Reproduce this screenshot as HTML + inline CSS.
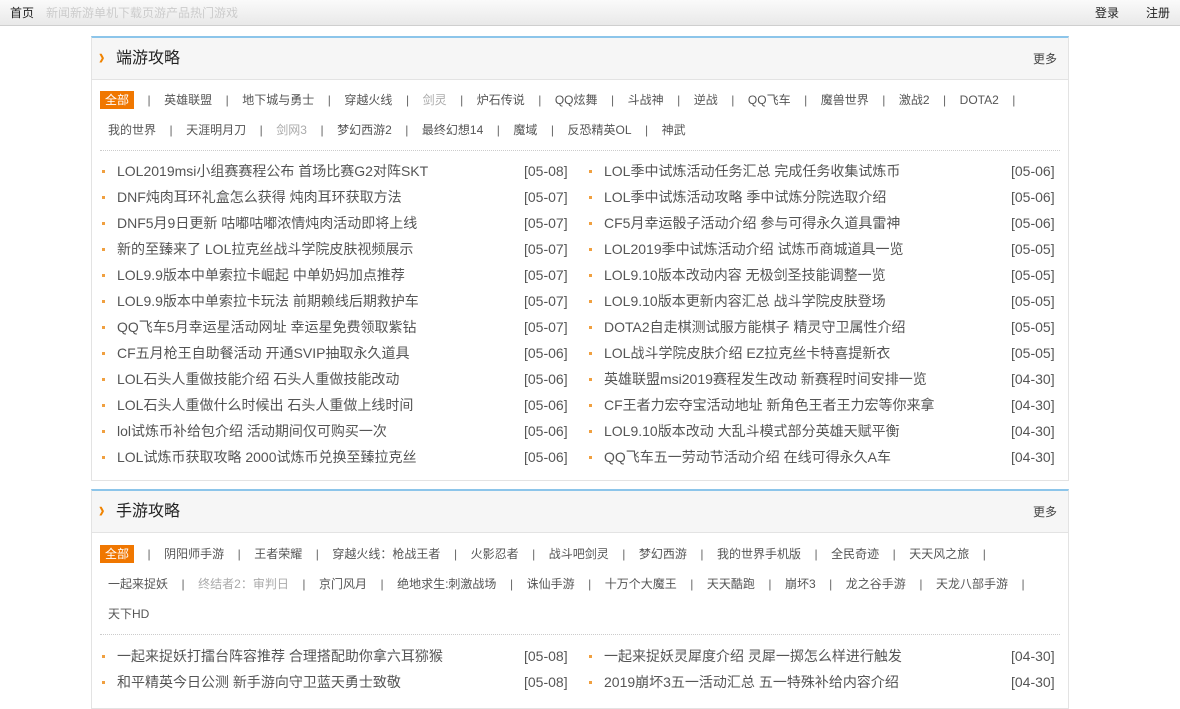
<!DOCTYPE html>
<html><head><meta charset="utf-8"><style>
*{margin:0;padding:0;box-sizing:border-box}
body{width:1180px;height:700px;overflow:hidden;background:#fff;font-family:"Liberation Sans","Noto Sans CJK SC",sans-serif;color:#333;position:relative}
.top{position:absolute;left:0;top:0;width:1180px;height:26px;background:linear-gradient(#fafafa,#e9e9e9);border-bottom:1px solid #cfcfcf;font-size:12px}
.top .home{position:absolute;left:10px;top:4px;color:#222}
.top .nav{position:absolute;left:46px;top:4px;color:#ccc}
.top .r{position:absolute;top:4px;color:#222}
.box{position:absolute;left:91px;width:978px;border:1px solid #e3e3e3;border-top:2px solid #8cc5ea}
.hd{height:42px;background:#f6f6f6;border-bottom:1px solid #e3e3e3;position:relative}
.hd .t{position:absolute;left:24px;top:10px;font-size:16px;line-height:22px;color:#222}
.hd .ar{position:absolute;left:6px;top:8px;color:#f08300;font-size:22px;line-height:22px;font-weight:bold;transform:scaleX(.8)}
.hd .m{position:absolute;right:11px;top:12px;font-size:12px;color:#444}
.tags{position:absolute;left:8px;font-size:12px;line-height:18px;color:#555;white-space:nowrap}
.tags span{display:inline-block}
.tags .s{margin:0 13.5px;color:#666}
.tags .on{background:#f07700;color:#fff;padding:0 5px}
.tags .g{color:#aaa}
.sep{position:absolute;left:8px;right:8px;border-top:1px dotted #ccc}
.li{position:absolute;font-size:14px;line-height:20px;color:#555;white-space:nowrap}
.li b{position:absolute;left:-15px;top:9px;width:3px;height:3px;background:#f0a040}
.d{position:absolute;font-size:14px;line-height:20px;color:#555}
</style></head><body>
<div class="top"><span class="home">首页</span><span class="nav">新闻新游单机下载页游产品热门游戏</span><span class="r" style="left:1095px">登录</span><span class="r" style="left:1146px">注册</span></div>

<div class="box" style="top:36px;height:445px">
<div class="hd"><span class="ar">›</span><span class="t">端游攻略</span><span class="m">更多</span></div>
<div class="tags" style="top:53px"><span class="on">全部</span><span class="s">|</span><span>英雄联盟</span><span class="s">|</span><span>地下城与勇士</span><span class="s">|</span><span>穿越火线</span><span class="s">|</span><span class="g">剑灵</span><span class="s">|</span><span>炉石传说</span><span class="s">|</span><span>QQ炫舞</span><span class="s">|</span><span>斗战神</span><span class="s">|</span><span>逆战</span><span class="s">|</span><span>QQ飞车</span><span class="s">|</span><span>魔兽世界</span><span class="s">|</span><span>激战2</span><span class="s">|</span><span>DOTA2</span><span class="s">|</span></div>
<div class="tags" style="top:83px;left:16px"><span>我的世界</span><span class="s">|</span><span>天涯明月刀</span><span class="s">|</span><span class="g">剑网3</span><span class="s">|</span><span>梦幻西游2</span><span class="s">|</span><span>最终幻想14</span><span class="s">|</span><span>魔域</span><span class="s">|</span><span>反恐精英OL</span><span class="s">|</span><span>神武</span></div>
<div class="sep" style="top:112px"></div>
</div>

<div class="box" style="top:489px;height:220px">
<div class="hd"><span class="ar">›</span><span class="t">手游攻略</span><span class="m">更多</span></div>
<div class="tags" style="top:54px"><span class="on">全部</span><span class="s">|</span><span>阴阳师手游</span><span class="s">|</span><span>王者荣耀</span><span class="s">|</span><span>穿越火线：枪战王者</span><span class="s">|</span><span>火影忍者</span><span class="s">|</span><span>战斗吧剑灵</span><span class="s">|</span><span>梦幻西游</span><span class="s">|</span><span>我的世界手机版</span><span class="s">|</span><span>全民奇迹</span><span class="s">|</span><span>天天风之旅</span><span class="s">|</span></div>
<div class="tags" style="top:84px;left:16px"><span>一起来捉妖</span><span class="s">|</span><span class="g">终结者2：审判日</span><span class="s">|</span><span>京门风月</span><span class="s">|</span><span>绝地求生:刺激战场</span><span class="s">|</span><span>诛仙手游</span><span class="s">|</span><span>十万个大魔王</span><span class="s">|</span><span>天天酷跑</span><span class="s">|</span><span>崩坏3</span><span class="s">|</span><span>龙之谷手游</span><span class="s">|</span><span>天龙八部手游</span><span class="s">|</span></div>
<div class="tags" style="top:114px;left:16px"><span>天下HD</span></div>
<div class="sep" style="top:143px"></div>
</div>

<div id="L"></div>
<script>
var a=[["LOL2019msi小组赛赛程公布 首场比赛G2对阵SKT","05-08","LOL季中试炼活动任务汇总 完成任务收集试炼币","05-06"],
["DNF炖肉耳环礼盒怎么获得 炖肉耳环获取方法","05-07","LOL季中试炼活动攻略 季中试炼分院选取介绍","05-06"],
["DNF5月9日更新 咕嘟咕嘟浓情炖肉活动即将上线","05-07","CF5月幸运骰子活动介绍 参与可得永久道具雷神","05-06"],
["新的至臻来了 LOL拉克丝战斗学院皮肤视频展示","05-07","LOL2019季中试炼活动介绍 试炼币商城道具一览","05-05"],
["LOL9.9版本中单索拉卡崛起 中单奶妈加点推荐","05-07","LOL9.10版本改动内容 无极剑圣技能调整一览","05-05"],
["LOL9.9版本中单索拉卡玩法 前期赖线后期救护车","05-07","LOL9.10版本更新内容汇总 战斗学院皮肤登场","05-05"],
["QQ飞车5月幸运星活动网址 幸运星免费领取紫钻","05-07","DOTA2自走棋测试服方能棋子 精灵守卫属性介绍","05-05"],
["CF五月枪王自助餐活动 开通SVIP抽取永久道具","05-06","LOL战斗学院皮肤介绍 EZ拉克丝卡特喜提新衣","05-05"],
["LOL石头人重做技能介绍 石头人重做技能改动","05-06","英雄联盟msi2019赛程发生改动 新赛程时间安排一览","04-30"],
["LOL石头人重做什么时候出 石头人重做上线时间","05-06","CF王者力宏夺宝活动地址 新角色王者王力宏等你来拿","04-30"],
["lol试炼币补给包介绍 活动期间仅可购买一次","05-06","LOL9.10版本改动 大乱斗模式部分英雄天赋平衡","04-30"],
["LOL试炼币获取攻略 2000试炼币兑换至臻拉克丝","05-06","QQ飞车五一劳动节活动介绍 在线可得永久A车","04-30"]];
var b=[["一起来捉妖打擂台阵容推荐 合理搭配助你拿六耳猕猴","05-08","一起来捉妖灵犀度介绍 灵犀一掷怎么样进行触发","04-30"],
["和平精英今日公测 新手游向守卫蓝天勇士致敬","05-08","2019崩坏3五一活动汇总 五一特殊补给内容介绍","04-30"]];
var h="";
function row(r,y){h+='<div class="li" style="left:117px;top:'+y+'px"><b></b>'+r[0]+'</div><div class="d" style="left:524px;top:'+y+'px">['+r[1]+']</div>';
h+='<div class="li" style="left:604px;top:'+y+'px"><b></b>'+r[2]+'</div><div class="d" style="left:1011px;top:'+y+'px">['+r[3]+']</div>';}
a.forEach(function(r,i){row(r,161+i*26)});
b.forEach(function(r,i){row(r,646+i*26)});
document.getElementById("L").innerHTML=h;
</script>
</body></html>
